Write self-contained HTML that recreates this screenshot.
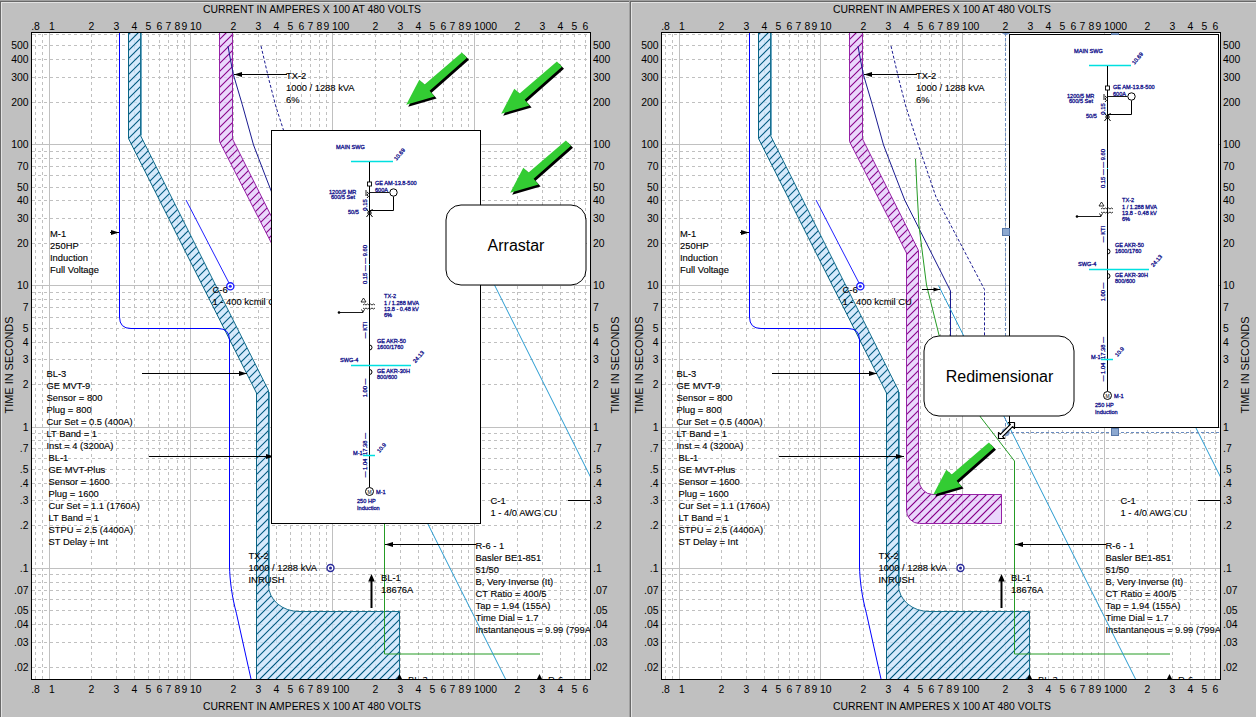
<!DOCTYPE html><html><head><meta charset="utf-8"><style>html,body{margin:0;padding:0;background:#c0c0c0;overflow:hidden}svg{display:block}</style></head><body><svg width="1256" height="717" viewBox="0 0 1256 717" font-family="'Liberation Sans', sans-serif">
<defs>
<clipPath id="plotclip"><rect x="32" y="33" width="558" height="646"/></clipPath>
<clipPath id="tealclip"><path d="M128.5 20V138.5L256.5 393V690H399.5V611.5H299A30.5 26.5 0 0 1 268.5 585V390.5L140.5 135.5V20Z"/></clipPath><clipPath id="magclip"><path d="M219.5 20V141.5L276.5 253V510A13 13 0 0 0 289.5 523.5H371.5V494.5H303A14.5 16 0 0 1 288.5 478.5V250.5L232.5 139V20Z"/></clipPath>
</defs>
<rect width="1256" height="717" fill="#a0a0a0"/>
<g transform="translate(0 0)">
<rect x="0" y="1" width="629" height="716" fill="#c0c0c0"/>
<rect x="0" y="1" width="629" height="1" fill="#696969"/><rect x="0" y="1" width="1" height="716" fill="#696969"/>
<rect x="1" y="2" width="628" height="1" fill="#e3e3e3"/><rect x="1" y="2" width="1" height="715" fill="#e3e3e3"/>
<text x="312" y="13" font-size="10.4" text-anchor="middle">CURRENT IN AMPERES X 100 AT 480 VOLTS</text>
<text x="312" y="710" font-size="10.4" text-anchor="middle">CURRENT IN AMPERES X 100 AT 480 VOLTS</text>
<text x="35.5" y="30" font-size="10.4" text-anchor="middle">.8</text>
<text x="35.5" y="693" font-size="10.4" text-anchor="middle">.8</text>
<text x="49.0" y="30" font-size="10.4" text-anchor="start">1</text>
<text x="49.0" y="693" font-size="10.4" text-anchor="start">1</text>
<text x="91.5" y="30" font-size="10.4" text-anchor="middle">2</text>
<text x="91.5" y="693" font-size="10.4" text-anchor="middle">2</text>
<text x="116.5" y="30" font-size="10.4" text-anchor="middle">3</text>
<text x="116.5" y="693" font-size="10.4" text-anchor="middle">3</text>
<text x="134.5" y="30" font-size="10.4" text-anchor="middle">4</text>
<text x="134.5" y="693" font-size="10.4" text-anchor="middle">4</text>
<text x="148.5" y="30" font-size="10.4" text-anchor="middle">5</text>
<text x="148.5" y="693" font-size="10.4" text-anchor="middle">5</text>
<text x="159.5" y="30" font-size="10.4" text-anchor="middle">6</text>
<text x="159.5" y="693" font-size="10.4" text-anchor="middle">6</text>
<text x="168.5" y="30" font-size="10.4" text-anchor="middle">7</text>
<text x="168.5" y="693" font-size="10.4" text-anchor="middle">7</text>
<text x="177.5" y="30" font-size="10.4" text-anchor="middle">8</text>
<text x="177.5" y="693" font-size="10.4" text-anchor="middle">8</text>
<text x="184.5" y="30" font-size="10.4" text-anchor="middle">9</text>
<text x="184.5" y="693" font-size="10.4" text-anchor="middle">9</text>
<text x="190.0" y="30" font-size="10.4" text-anchor="start">10</text>
<text x="190.0" y="693" font-size="10.4" text-anchor="start">10</text>
<text x="233.5" y="30" font-size="10.4" text-anchor="middle">2</text>
<text x="233.5" y="693" font-size="10.4" text-anchor="middle">2</text>
<text x="258.5" y="30" font-size="10.4" text-anchor="middle">3</text>
<text x="258.5" y="693" font-size="10.4" text-anchor="middle">3</text>
<text x="276.5" y="30" font-size="10.4" text-anchor="middle">4</text>
<text x="276.5" y="693" font-size="10.4" text-anchor="middle">4</text>
<text x="290.5" y="30" font-size="10.4" text-anchor="middle">5</text>
<text x="290.5" y="693" font-size="10.4" text-anchor="middle">5</text>
<text x="301.5" y="30" font-size="10.4" text-anchor="middle">6</text>
<text x="301.5" y="693" font-size="10.4" text-anchor="middle">6</text>
<text x="310.5" y="30" font-size="10.4" text-anchor="middle">7</text>
<text x="310.5" y="693" font-size="10.4" text-anchor="middle">7</text>
<text x="319.5" y="30" font-size="10.4" text-anchor="middle">8</text>
<text x="319.5" y="693" font-size="10.4" text-anchor="middle">8</text>
<text x="326.5" y="30" font-size="10.4" text-anchor="middle">9</text>
<text x="326.5" y="693" font-size="10.4" text-anchor="middle">9</text>
<text x="332.0" y="30" font-size="10.4" text-anchor="start">100</text>
<text x="332.0" y="693" font-size="10.4" text-anchor="start">100</text>
<text x="375.5" y="30" font-size="10.4" text-anchor="middle">2</text>
<text x="375.5" y="693" font-size="10.4" text-anchor="middle">2</text>
<text x="400.5" y="30" font-size="10.4" text-anchor="middle">3</text>
<text x="400.5" y="693" font-size="10.4" text-anchor="middle">3</text>
<text x="418.5" y="30" font-size="10.4" text-anchor="middle">4</text>
<text x="418.5" y="693" font-size="10.4" text-anchor="middle">4</text>
<text x="432.5" y="30" font-size="10.4" text-anchor="middle">5</text>
<text x="432.5" y="693" font-size="10.4" text-anchor="middle">5</text>
<text x="443.5" y="30" font-size="10.4" text-anchor="middle">6</text>
<text x="443.5" y="693" font-size="10.4" text-anchor="middle">6</text>
<text x="452.5" y="30" font-size="10.4" text-anchor="middle">7</text>
<text x="452.5" y="693" font-size="10.4" text-anchor="middle">7</text>
<text x="461.5" y="30" font-size="10.4" text-anchor="middle">8</text>
<text x="461.5" y="693" font-size="10.4" text-anchor="middle">8</text>
<text x="468.5" y="30" font-size="10.4" text-anchor="middle">9</text>
<text x="468.5" y="693" font-size="10.4" text-anchor="middle">9</text>
<text x="474.0" y="30" font-size="10.4" text-anchor="start">1000</text>
<text x="474.0" y="693" font-size="10.4" text-anchor="start">1000</text>
<text x="517.5" y="30" font-size="10.4" text-anchor="middle">2</text>
<text x="517.5" y="693" font-size="10.4" text-anchor="middle">2</text>
<text x="542.5" y="30" font-size="10.4" text-anchor="middle">3</text>
<text x="542.5" y="693" font-size="10.4" text-anchor="middle">3</text>
<text x="560.5" y="30" font-size="10.4" text-anchor="middle">4</text>
<text x="560.5" y="693" font-size="10.4" text-anchor="middle">4</text>
<text x="574.5" y="30" font-size="10.4" text-anchor="middle">5</text>
<text x="574.5" y="693" font-size="10.4" text-anchor="middle">5</text>
<text x="585.5" y="30" font-size="10.4" text-anchor="middle">6</text>
<text x="585.5" y="693" font-size="10.4" text-anchor="middle">6</text>
<text x="28.5" y="49.2" font-size="10.4" text-anchor="end">500</text>
<text x="593" y="49.2" font-size="10.4">500</text>
<text x="28.5" y="63.2" font-size="10.4" text-anchor="end">400</text>
<text x="593" y="63.2" font-size="10.4">400</text>
<text x="28.5" y="81.2" font-size="10.4" text-anchor="end">300</text>
<text x="593" y="81.2" font-size="10.4">300</text>
<text x="28.5" y="106.2" font-size="10.4" text-anchor="end">200</text>
<text x="593" y="106.2" font-size="10.4">200</text>
<text x="28.5" y="148.2" font-size="10.4" text-anchor="end">100</text>
<text x="593" y="148.2" font-size="10.4">100</text>
<text x="28.5" y="170.2" font-size="10.4" text-anchor="end">70</text>
<text x="593" y="170.2" font-size="10.4">70</text>
<text x="28.5" y="191.2" font-size="10.4" text-anchor="end">50</text>
<text x="593" y="191.2" font-size="10.4">50</text>
<text x="28.5" y="204.2" font-size="10.4" text-anchor="end">40</text>
<text x="593" y="204.2" font-size="10.4">40</text>
<text x="28.5" y="222.2" font-size="10.4" text-anchor="end">30</text>
<text x="593" y="222.2" font-size="10.4">30</text>
<text x="28.5" y="247.2" font-size="10.4" text-anchor="end">20</text>
<text x="593" y="247.2" font-size="10.4">20</text>
<text x="28.5" y="289.2" font-size="10.4" text-anchor="end">10</text>
<text x="593" y="289.2" font-size="10.4">10</text>
<text x="28.5" y="311.2" font-size="10.4" text-anchor="end">7</text>
<text x="593" y="311.2" font-size="10.4">7</text>
<text x="28.5" y="332.2" font-size="10.4" text-anchor="end">5</text>
<text x="593" y="332.2" font-size="10.4">5</text>
<text x="28.5" y="346.2" font-size="10.4" text-anchor="end">4</text>
<text x="593" y="346.2" font-size="10.4">4</text>
<text x="28.5" y="363.2" font-size="10.4" text-anchor="end">3</text>
<text x="593" y="363.2" font-size="10.4">3</text>
<text x="28.5" y="388.2" font-size="10.4" text-anchor="end">2</text>
<text x="593" y="388.2" font-size="10.4">2</text>
<text x="28.5" y="431.2" font-size="10.4" text-anchor="end">1</text>
<text x="593" y="431.2" font-size="10.4">1</text>
<text x="28.5" y="452.2" font-size="10.4" text-anchor="end">.7</text>
<text x="593" y="452.2" font-size="10.4">.7</text>
<text x="28.5" y="473.2" font-size="10.4" text-anchor="end">.5</text>
<text x="593" y="473.2" font-size="10.4">.5</text>
<text x="28.5" y="487.2" font-size="10.4" text-anchor="end">.4</text>
<text x="593" y="487.2" font-size="10.4">.4</text>
<text x="28.5" y="504.2" font-size="10.4" text-anchor="end">.3</text>
<text x="593" y="504.2" font-size="10.4">.3</text>
<text x="28.5" y="529.2" font-size="10.4" text-anchor="end">.2</text>
<text x="593" y="529.2" font-size="10.4">.2</text>
<text x="28.5" y="572.2" font-size="10.4" text-anchor="end">.1</text>
<text x="593" y="572.2" font-size="10.4">.1</text>
<text x="28.5" y="594.2" font-size="10.4" text-anchor="end">.07</text>
<text x="593" y="594.2" font-size="10.4">.07</text>
<text x="28.5" y="614.2" font-size="10.4" text-anchor="end">.05</text>
<text x="593" y="614.2" font-size="10.4">.05</text>
<text x="28.5" y="628.2" font-size="10.4" text-anchor="end">.04</text>
<text x="593" y="628.2" font-size="10.4">.04</text>
<text x="28.5" y="646.2" font-size="10.4" text-anchor="end">.03</text>
<text x="593" y="646.2" font-size="10.4">.03</text>
<text x="28.5" y="671.2" font-size="10.4" text-anchor="end">.02</text>
<text x="593" y="671.2" font-size="10.4">.02</text>
<text transform="translate(12.6 365) rotate(-90)" font-size="10.9" text-anchor="middle">TIME IN SECONDS</text>
<text transform="translate(618.6 365) rotate(-90)" font-size="10.9" text-anchor="middle">TIME IN SECONDS</text>
<rect x="31.5" y="32.5" width="559" height="647" fill="#fff" stroke="#000"/>
<g clip-path="url(#plotclip)">
<path d="M35.5 34V679M42.5 34V679M91.5 34V679M116.5 34V679M134.5 34V679M148.5 34V679M159.5 34V679M168.5 34V679M177.5 34V679M184.5 34V679M233.5 34V679M258.5 34V679M276.5 34V679M290.5 34V679M301.5 34V679M310.5 34V679M319.5 34V679M326.5 34V679M375.5 34V679M400.5 34V679M418.5 34V679M432.5 34V679M443.5 34V679M452.5 34V679M461.5 34V679M468.5 34V679M517.5 34V679M542.5 34V679M560.5 34V679M574.5 34V679M585.5 34V679" stroke="#c0c0c0" stroke-dasharray="3 3" fill="none"/>
<path d="M32 667.5H590M32 642.5H590M32 624.5H590M32 610.5H590M32 599.5H590M32 590.5H590M32 582.5H590M32 574.5H590M32 525.5H590M32 500.5H590M32 483.5H590M32 469.5H590M32 458.5H590M32 448.5H590M32 440.5H590M32 433.5H590M32 384.5H590M32 359.5H590M32 342.5H590M32 328.5H590M32 317.5H590M32 307.5H590M32 299.5H590M32 292.5H590M32 243.5H590M32 218.5H590M32 200.5H590M32 187.5H590M32 175.5H590M32 166.5H590M32 158.5H590M32 151.5H590M32 102.5H590M32 77.5H590M32 59.5H590M32 45.5H590M32 34.5H590" stroke="#c0c0c0" stroke-dasharray="3 3" fill="none"/>
<path d="M49.5 33V679M190.5 33V679M332.5 33V679M474.5 33V679M32 568.5H590M32 427.5H590M32 285.5H590M32 144.5H590" stroke="#c0c0c0" fill="none"/>
<path d="M128.5 20V138.5L256.5 393V690H399.5V611.5H299A30.5 26.5 0 0 1 268.5 585V390.5L140.5 135.5V20Z" fill="#c8e3fb" fill-opacity="0.75"/>
<path d="M-557 720L163 0M-549 720L171 0M-541 720L179 0M-533 720L187 0M-525 720L195 0M-517 720L203 0M-509 720L211 0M-501 720L219 0M-493 720L227 0M-485 720L235 0M-477 720L243 0M-469 720L251 0M-461 720L259 0M-453 720L267 0M-445 720L275 0M-437 720L283 0M-429 720L291 0M-421 720L299 0M-413 720L307 0M-405 720L315 0M-397 720L323 0M-389 720L331 0M-381 720L339 0M-373 720L347 0M-365 720L355 0M-357 720L363 0M-349 720L371 0M-341 720L379 0M-333 720L387 0M-325 720L395 0M-317 720L403 0M-309 720L411 0M-301 720L419 0M-293 720L427 0M-285 720L435 0M-277 720L443 0M-269 720L451 0M-261 720L459 0M-253 720L467 0M-245 720L475 0M-237 720L483 0M-229 720L491 0M-221 720L499 0M-213 720L507 0M-205 720L515 0M-197 720L523 0M-189 720L531 0M-181 720L539 0M-173 720L547 0M-165 720L555 0M-157 720L563 0M-149 720L571 0M-141 720L579 0M-133 720L587 0M-125 720L595 0M-117 720L603 0M-109 720L611 0M-101 720L619 0M-93 720L627 0M-85 720L635 0M-77 720L643 0M-69 720L651 0M-61 720L659 0M-53 720L667 0M-45 720L675 0M-37 720L683 0M-29 720L691 0M-21 720L699 0M-13 720L707 0M-5 720L715 0M3 720L723 0M11 720L731 0M19 720L739 0M27 720L747 0M35 720L755 0M43 720L763 0M51 720L771 0M59 720L779 0M67 720L787 0M75 720L795 0M83 720L803 0M91 720L811 0M99 720L819 0M107 720L827 0M115 720L835 0M123 720L843 0M131 720L851 0M139 720L859 0M147 720L867 0M155 720L875 0M163 720L883 0M171 720L891 0M179 720L899 0M187 720L907 0M195 720L915 0M203 720L923 0M211 720L931 0M219 720L939 0M227 720L947 0M235 720L955 0M243 720L963 0M251 720L971 0M259 720L979 0M267 720L987 0M275 720L995 0M283 720L1003 0M291 720L1011 0M299 720L1019 0M307 720L1027 0M315 720L1035 0M323 720L1043 0M331 720L1051 0M339 720L1059 0M347 720L1067 0M355 720L1075 0M363 720L1083 0M371 720L1091 0M379 720L1099 0M387 720L1107 0M395 720L1115 0" stroke="#005a80" stroke-width="1.15" fill="none" clip-path="url(#tealclip)"/>
<path d="M128.5 20V138.5L256.5 393V690" fill="none" stroke="#0b6484"/>
<path d="M141.5 20V135.5M269.5 392V586" fill="none" stroke="#64a4c0"/>
<path d="M140.5 20V135.5L268.5 390.5V585A30.5 26.5 0 0 0 299 611.5H399.5V690" fill="none" stroke="#17708f"/>
<path d="M219.5 20V141.5L276.5 253V510A13 13 0 0 0 289.5 523.5H371.5V494.5H303A14.5 16 0 0 1 288.5 478.5V250.5L232.5 139V20Z" fill="#e3cbfb" fill-opacity="0.75"/>
<path d="M-477 720L243 0M-469 720L251 0M-461 720L259 0M-453 720L267 0M-445 720L275 0M-437 720L283 0M-429 720L291 0M-421 720L299 0M-413 720L307 0M-405 720L315 0M-397 720L323 0M-389 720L331 0M-381 720L339 0M-373 720L347 0M-365 720L355 0M-357 720L363 0M-349 720L371 0M-341 720L379 0M-333 720L387 0M-325 720L395 0M-317 720L403 0M-309 720L411 0M-301 720L419 0M-293 720L427 0M-285 720L435 0M-277 720L443 0M-269 720L451 0M-261 720L459 0M-253 720L467 0M-245 720L475 0M-237 720L483 0M-229 720L491 0M-221 720L499 0M-213 720L507 0M-205 720L515 0M-197 720L523 0M-189 720L531 0M-181 720L539 0M-173 720L547 0M-165 720L555 0M-157 720L563 0M-149 720L571 0M-141 720L579 0M-133 720L587 0M-125 720L595 0M-117 720L603 0M-109 720L611 0M-101 720L619 0M-93 720L627 0M-85 720L635 0M-77 720L643 0M-69 720L651 0M-61 720L659 0M-53 720L667 0M-45 720L675 0M-37 720L683 0M-29 720L691 0M-21 720L699 0M-13 720L707 0M-5 720L715 0M3 720L723 0M11 720L731 0M19 720L739 0M27 720L747 0M35 720L755 0M43 720L763 0M51 720L771 0M59 720L779 0M67 720L787 0M75 720L795 0M83 720L803 0M91 720L811 0M99 720L819 0M107 720L827 0M115 720L835 0M123 720L843 0M131 720L851 0M139 720L859 0M147 720L867 0M155 720L875 0" stroke="#880088" stroke-width="1.15" fill="none" clip-path="url(#magclip)"/>
<path d="M219.5 20V141.5L276.5 253V510A13 13 0 0 0 289.5 523.5H371.5V494.5H303A14.5 16 0 0 1 288.5 478.5V250.5L232.5 139V20Z" fill="none" stroke="#9622a6"/>
<path d="M119.5 20V317Q119.5 328.5 131 328.5H218Q229.5 328.5 229.5 340V566C229.7 580 232 597 236.4 613.2L251 679" fill="none" stroke="#0000ff"/>
<path d="M186 200L229 283" fill="none" stroke="#2020ff"/>
<circle cx="230.3" cy="286.3" r="3.6" fill="#fff" stroke="#2020ff" stroke-width="1.4"/><circle cx="230.3" cy="286.3" r="1.5" fill="#2020ff"/>
<path d="M228 46L230.5 60L233.4 74.6L242.3 104.7L253.5 144.9L264.6 174L274.7 200L320.5 291V384" fill="none" stroke="#1a1a90"/>
<path d="M261 46L269 80L276 107L288 144L306 197L354.5 289.5V384" fill="none" stroke="#1a1a90" stroke-dasharray="3 2"/>
<path d="M285.5 159L287 190L289 226L296.5 285L309 335L350.5 417L384.5 461V654H540" fill="none" stroke="#259b25"/>
<path d="M308.5 285.5L505.5 679" fill="none" stroke="#2a9bd0"/>
<path d="M480 256L600 496" fill="none" stroke="#2a9bd0"/>
<circle cx="330.5" cy="568" r="3.5" fill="#fff" stroke="#2a2a9a" stroke-width="1.4"/><circle cx="330.5" cy="568" r="1.5" fill="#2a2a9a"/>
<g font-size="9.4" fill="#000" stroke="#000" stroke-width="0.12"><text x="286" y="78.5">TX-2</text><text x="286" y="90.5">1000 / 1288 kVA</text><text x="286" y="102.5">6%</text></g>
<path d="M234 74.5H287" stroke="#000" fill="none"/><path d="M234 74.5l8 -2.5v5z" fill="#000"/>
<g font-size="9.4" fill="#000" stroke="#000" stroke-width="0.12"><text x="50" y="236.5">M-1</text><text x="50" y="248.5">250HP</text><text x="50" y="260.5">Induction</text><text x="50" y="272.5">Full Voltage</text></g>
<path d="M110 232.5H119" stroke="#000" fill="none"/><path d="M119 232.5l-8 -2.5v5.0z" fill="#000"/>
<g font-size="9.4" fill="#000" stroke="#000" stroke-width="0.12"><text x="212.5" y="293">C-6</text><text x="212.5" y="305">1 - 400 kcmil CU</text></g>
<path d="M292 289.5H310" stroke="#000" fill="none"/><path d="M310 289.5l-6.5 -2v4z" fill="#000"/>
<g font-size="9.4" fill="#000" stroke="#000" stroke-width="0.12"><text x="46.5" y="376.5">BL-3</text><text x="46.5" y="388.5">GE MVT-9</text><text x="46.5" y="400.5">Sensor = 800</text><text x="46.5" y="412.5">Plug = 800</text><text x="46.5" y="424.5">Cur Set = 0.5 (400A)</text><text x="46.5" y="436.5">LT Band = 1</text><text x="46.5" y="448.5">Inst = 4 (3200A)</text></g>
<path d="M142 373.5H247" stroke="#000" fill="none"/><path d="M247 373.5l-8 -2.5v5.0z" fill="#000"/>
<g font-size="9.4" fill="#000" stroke="#000" stroke-width="0.12"><text x="48.5" y="460.5">BL-1</text><text x="48.5" y="472.5">GE MVT-Plus</text><text x="48.5" y="484.5">Sensor = 1600</text><text x="48.5" y="496.5">Plug = 1600</text><text x="48.5" y="508.5">Cur Set = 1.1 (1760A)</text><text x="48.5" y="520.5">LT Band = 1</text><text x="48.5" y="532.5">STPU = 2.5 (4400A)</text><text x="48.5" y="544.5">ST Delay = Int</text></g>
<path d="M149 456.5H274" stroke="#000" fill="none"/><path d="M274 456.5l-8 -2.5v5.0z" fill="#000"/>
<g font-size="9.4" fill="#000" stroke="#000" stroke-width="0.12"><text x="248.5" y="559">TX-2</text><text x="248.5" y="571">1000 / 1288 kVA</text><text x="248.5" y="583">INRUSH</text></g>
<g font-size="9.4" fill="#000" stroke="#000" stroke-width="0.12"><text x="381" y="581.2">BL-1</text><text x="381" y="593.2">18676A</text></g>
<path d="M371.5 608V580" stroke="#000" stroke-width="2" fill="none"/><path d="M371.5 574l-3.3 7.5h6.6z" fill="#000"/>
<g font-size="9.4" fill="#000" stroke="#000" stroke-width="0.12"><text x="475.5" y="549">R-6 - 1</text><text x="475.5" y="561">Basler BE1-851</text><text x="475.5" y="573">51/50</text><text x="475.5" y="585">B, Very Inverse (It)</text><text x="475.5" y="597">CT Ratio = 400/5</text><text x="475.5" y="609">Tap = 1.94 (155A)</text><text x="475.5" y="621">Time Dial = 1.7</text><text x="475.5" y="633">Instantaneous = 9.99 (799A)</text></g>
<path d="M385 544.5H476" stroke="#000" fill="none"/><path d="M385 544.5l8 -2.5v5z" fill="#000"/>
<g font-size="9.4" fill="#000" stroke="#000" stroke-width="0.12"><text x="490.5" y="504">C-1</text><text x="490.5" y="516">1 - 4/0 AWG CU</text></g>
<path d="M568 500.5H590" stroke="#000" fill="none"/>
<path d="M399.5 674l-3 6h6z" fill="#000"/>
<text x="408" y="683" font-size="9.4">BL-3</text>
<path d="M539.5 674l-3 6h6z" fill="#000"/>
<text x="548" y="683" font-size="9.4">R-6</text>
<g transform="translate(271 130)"><rect x="0.5" y="0.5" width="209" height="393" fill="#fff" stroke="#000"/><text x="65" y="18.5" font-size="5.6" fill="#10108a" stroke="#10108a" stroke-width="0.3">MAIN SWG</text>
<path d="M80 31.5H122" stroke="#00e0e0" stroke-width="1.5"/>
<text transform="translate(130 25.5) rotate(-50)" font-size="5.5" fill="#10108a" stroke="#10108a" stroke-width="0.3" text-anchor="middle">10.69</text>
<path d="M98.5 32V357" stroke="#000" fill="none"/>
<rect x="96.5" y="52" width="4" height="4" fill="#fff" stroke="#000" stroke-width="0.9"/>
<text x="104" y="55" font-size="5.6" fill="#10108a" stroke="#10108a" stroke-width="0.3">GE AM-13.8-500</text>
<text x="104" y="61.5" font-size="5.6" fill="#10108a" stroke="#10108a" stroke-width="0.3">600A</text>
<text x="58" y="63.5" font-size="5.6" fill="#10108a" stroke="#10108a" stroke-width="0.3">1200/5 MR</text>
<text x="60" y="69" font-size="5.6" fill="#10108a" stroke="#10108a" stroke-width="0.3">600/5 Set</text>
<path d="M95 60V66M98.5 62.5H118.5M96 62q3 1 0 3M96 65q3 1 0 3" stroke="#000" fill="none" stroke-width="0.9"/>
<circle cx="122.5" cy="62.5" r="3.7" fill="#fff" stroke="#000"/>
<path d="M122.5 66.5V80.5H98.5" stroke="#000" fill="none"/>
<path d="M95.5 79L101.5 87M101.5 79L95.5 87M96 83H101" stroke="#000" fill="none"/>
<text x="77" y="84" font-size="5.6" fill="#10108a" stroke="#10108a" stroke-width="0.3">50/5</text>
<text transform="translate(96 75) rotate(-90)" font-size="5.8" fill="#10108a" stroke="#10108a" stroke-width="0.3" text-anchor="middle">0.15</text>
<text transform="translate(96 134.5) rotate(-90)" font-size="5.8" fill="#10108a" stroke="#10108a" stroke-width="0.3" text-anchor="middle">0.15 — — 9.60</text>
<rect x="98" y="134" width="1" height="1" fill="#00e0e0"/>
<path d="M90 172l2.5 -4l2.5 4z" fill="none" stroke="#000" stroke-width="0.8"/>
<path d="M92 175q1.5 -2 3 0q1.5 -2 3 0q1.5 -2 3 0q1.5 -2 3 0M92 178q1.5 2 3 0q1.5 2 3 0q1.5 2 3 0q1.5 2 3 0" stroke="#000" fill="none" stroke-width="0.8"/>
<path d="M90.5 179.5l1.5 2.5l1.5 -2.5M92 182V182.5H68" stroke="#000" fill="none" stroke-width="0.9"/>
<circle cx="68" cy="182.5" r="1.3" fill="#000"/>
<text x="113" y="168" font-size="5.6" fill="#10108a" stroke="#10108a" stroke-width="0.3">TX-2</text>
<text x="113" y="174.5" font-size="5.6" fill="#10108a" stroke="#10108a" stroke-width="0.3">1 / 1.288 MVA</text>
<text x="113" y="180.5" font-size="5.6" fill="#10108a" stroke="#10108a" stroke-width="0.3">13.8 - 0.48 kV</text>
<text x="113" y="187" font-size="5.6" fill="#10108a" stroke="#10108a" stroke-width="0.3">6%</text>
<text transform="translate(96 200) rotate(-90)" font-size="5.8" fill="#10108a" stroke="#10108a" stroke-width="0.3" text-anchor="middle">— KTI</text>
<path d="M98.5 215a2 2 0 0 1 0 5M98.5 239.5a2 2 0 0 1 0 5" stroke="#000" fill="none"/>
<text x="106" y="213" font-size="5.6" fill="#10108a" stroke="#10108a" stroke-width="0.3">GE AKR-50</text>
<text x="106" y="219" font-size="5.6" fill="#10108a" stroke="#10108a" stroke-width="0.3">1600/1760</text>
<text x="69" y="231.5" font-size="5.6" fill="#10108a" stroke="#10108a" stroke-width="0.3">SWG-4</text>
<path d="M80 235.5H140" stroke="#00e0e0" stroke-width="1.5"/>
<text transform="translate(149 228) rotate(-50)" font-size="5.5" fill="#10108a" stroke="#10108a" stroke-width="0.3" text-anchor="middle">24.13</text>
<text x="106" y="243" font-size="5.6" fill="#10108a" stroke="#10108a" stroke-width="0.3">GE AKR-30H</text>
<text x="106" y="249" font-size="5.6" fill="#10108a" stroke="#10108a" stroke-width="0.3">800/600</text>
<text transform="translate(96 258) rotate(-90)" font-size="5.8" fill="#10108a" stroke="#10108a" stroke-width="0.3" text-anchor="middle">1.00 —</text>
<text transform="translate(96 314) rotate(-90)" font-size="5.8" fill="#10108a" stroke="#10108a" stroke-width="0.3" text-anchor="middle">17.38 —</text>
<text x="82" y="324.5" font-size="5.6" fill="#10108a" stroke="#10108a" stroke-width="0.3">M-1</text>
<path d="M92 325.5H104" stroke="#00e0e0" stroke-width="1.5"/>
<text transform="translate(112 319) rotate(-50)" font-size="5.5" fill="#10108a" stroke="#10108a" stroke-width="0.3" text-anchor="middle">10.9</text>
<text transform="translate(96 338) rotate(-90)" font-size="5.8" fill="#10108a" stroke="#10108a" stroke-width="0.3" text-anchor="middle">— 1.04</text>
<circle cx="98.5" cy="361.5" r="4" fill="#fff" stroke="#000"/>
<text x="98.5" y="363.5" font-size="5" text-anchor="middle">M</text>
<text x="105" y="364" font-size="5.6" fill="#10108a" stroke="#10108a" stroke-width="0.3">M-1</text>
<text x="86" y="373" font-size="5.6" fill="#10108a" stroke="#10108a" stroke-width="0.3">250 HP</text>
<text x="86" y="379.5" font-size="5.6" fill="#10108a" stroke="#10108a" stroke-width="0.3">Induction</text></g>
<rect x="446" y="205" width="140" height="80" rx="15" ry="15" fill="#fff" stroke="#000"/><text x="516" y="251" font-size="16" text-anchor="middle">Arrastar</text>
<polygon points="463.9,54.6 469.0,59.8 431.6,92.7 436.6,98.5 408.2,106.7 421.3,81.8 426.6,86.6" fill="#000"/><polygon points="461.9,52.6 467.0,57.8 429.6,90.7 434.6,96.5 406.2,104.7 419.3,79.8 424.6,84.6" fill="#33cc33"/>
<polygon points="558.9,63.6 564.0,68.8 526.6,101.7 531.6,107.5 503.2,115.7 516.3,90.8 521.6,95.6" fill="#000"/><polygon points="556.9,61.6 562.0,66.8 524.6,99.7 529.6,105.5 501.2,113.7 514.3,88.8 519.6,93.6" fill="#33cc33"/>
<polygon points="567.9,142.6 573.0,147.8 535.6,180.7 540.6,186.5 512.2,194.7 525.3,169.8 530.6,174.6" fill="#000"/><polygon points="565.9,140.6 571.0,145.8 533.6,178.7 538.6,184.5 510.2,192.7 523.3,167.8 528.6,172.6" fill="#33cc33"/>
</g>
</g>
<g transform="translate(630 0)">
<rect x="0" y="1" width="629" height="716" fill="#c0c0c0"/>
<rect x="0" y="1" width="629" height="1" fill="#696969"/><rect x="0" y="1" width="1" height="716" fill="#696969"/>
<rect x="1" y="2" width="628" height="1" fill="#e3e3e3"/><rect x="1" y="2" width="1" height="715" fill="#e3e3e3"/>
<text x="312" y="13" font-size="10.4" text-anchor="middle">CURRENT IN AMPERES X 100 AT 480 VOLTS</text>
<text x="312" y="710" font-size="10.4" text-anchor="middle">CURRENT IN AMPERES X 100 AT 480 VOLTS</text>
<text x="35.5" y="30" font-size="10.4" text-anchor="middle">.8</text>
<text x="35.5" y="693" font-size="10.4" text-anchor="middle">.8</text>
<text x="49.0" y="30" font-size="10.4" text-anchor="start">1</text>
<text x="49.0" y="693" font-size="10.4" text-anchor="start">1</text>
<text x="91.5" y="30" font-size="10.4" text-anchor="middle">2</text>
<text x="91.5" y="693" font-size="10.4" text-anchor="middle">2</text>
<text x="116.5" y="30" font-size="10.4" text-anchor="middle">3</text>
<text x="116.5" y="693" font-size="10.4" text-anchor="middle">3</text>
<text x="134.5" y="30" font-size="10.4" text-anchor="middle">4</text>
<text x="134.5" y="693" font-size="10.4" text-anchor="middle">4</text>
<text x="148.5" y="30" font-size="10.4" text-anchor="middle">5</text>
<text x="148.5" y="693" font-size="10.4" text-anchor="middle">5</text>
<text x="159.5" y="30" font-size="10.4" text-anchor="middle">6</text>
<text x="159.5" y="693" font-size="10.4" text-anchor="middle">6</text>
<text x="168.5" y="30" font-size="10.4" text-anchor="middle">7</text>
<text x="168.5" y="693" font-size="10.4" text-anchor="middle">7</text>
<text x="177.5" y="30" font-size="10.4" text-anchor="middle">8</text>
<text x="177.5" y="693" font-size="10.4" text-anchor="middle">8</text>
<text x="184.5" y="30" font-size="10.4" text-anchor="middle">9</text>
<text x="184.5" y="693" font-size="10.4" text-anchor="middle">9</text>
<text x="190.0" y="30" font-size="10.4" text-anchor="start">10</text>
<text x="190.0" y="693" font-size="10.4" text-anchor="start">10</text>
<text x="233.5" y="30" font-size="10.4" text-anchor="middle">2</text>
<text x="233.5" y="693" font-size="10.4" text-anchor="middle">2</text>
<text x="258.5" y="30" font-size="10.4" text-anchor="middle">3</text>
<text x="258.5" y="693" font-size="10.4" text-anchor="middle">3</text>
<text x="276.5" y="30" font-size="10.4" text-anchor="middle">4</text>
<text x="276.5" y="693" font-size="10.4" text-anchor="middle">4</text>
<text x="290.5" y="30" font-size="10.4" text-anchor="middle">5</text>
<text x="290.5" y="693" font-size="10.4" text-anchor="middle">5</text>
<text x="301.5" y="30" font-size="10.4" text-anchor="middle">6</text>
<text x="301.5" y="693" font-size="10.4" text-anchor="middle">6</text>
<text x="310.5" y="30" font-size="10.4" text-anchor="middle">7</text>
<text x="310.5" y="693" font-size="10.4" text-anchor="middle">7</text>
<text x="319.5" y="30" font-size="10.4" text-anchor="middle">8</text>
<text x="319.5" y="693" font-size="10.4" text-anchor="middle">8</text>
<text x="326.5" y="30" font-size="10.4" text-anchor="middle">9</text>
<text x="326.5" y="693" font-size="10.4" text-anchor="middle">9</text>
<text x="332.0" y="30" font-size="10.4" text-anchor="start">100</text>
<text x="332.0" y="693" font-size="10.4" text-anchor="start">100</text>
<text x="375.5" y="30" font-size="10.4" text-anchor="middle">2</text>
<text x="375.5" y="693" font-size="10.4" text-anchor="middle">2</text>
<text x="400.5" y="30" font-size="10.4" text-anchor="middle">3</text>
<text x="400.5" y="693" font-size="10.4" text-anchor="middle">3</text>
<text x="418.5" y="30" font-size="10.4" text-anchor="middle">4</text>
<text x="418.5" y="693" font-size="10.4" text-anchor="middle">4</text>
<text x="432.5" y="30" font-size="10.4" text-anchor="middle">5</text>
<text x="432.5" y="693" font-size="10.4" text-anchor="middle">5</text>
<text x="443.5" y="30" font-size="10.4" text-anchor="middle">6</text>
<text x="443.5" y="693" font-size="10.4" text-anchor="middle">6</text>
<text x="452.5" y="30" font-size="10.4" text-anchor="middle">7</text>
<text x="452.5" y="693" font-size="10.4" text-anchor="middle">7</text>
<text x="461.5" y="30" font-size="10.4" text-anchor="middle">8</text>
<text x="461.5" y="693" font-size="10.4" text-anchor="middle">8</text>
<text x="468.5" y="30" font-size="10.4" text-anchor="middle">9</text>
<text x="468.5" y="693" font-size="10.4" text-anchor="middle">9</text>
<text x="474.0" y="30" font-size="10.4" text-anchor="start">1000</text>
<text x="474.0" y="693" font-size="10.4" text-anchor="start">1000</text>
<text x="517.5" y="30" font-size="10.4" text-anchor="middle">2</text>
<text x="517.5" y="693" font-size="10.4" text-anchor="middle">2</text>
<text x="542.5" y="30" font-size="10.4" text-anchor="middle">3</text>
<text x="542.5" y="693" font-size="10.4" text-anchor="middle">3</text>
<text x="560.5" y="30" font-size="10.4" text-anchor="middle">4</text>
<text x="560.5" y="693" font-size="10.4" text-anchor="middle">4</text>
<text x="574.5" y="30" font-size="10.4" text-anchor="middle">5</text>
<text x="574.5" y="693" font-size="10.4" text-anchor="middle">5</text>
<text x="585.5" y="30" font-size="10.4" text-anchor="middle">6</text>
<text x="585.5" y="693" font-size="10.4" text-anchor="middle">6</text>
<text x="28.5" y="49.2" font-size="10.4" text-anchor="end">500</text>
<text x="593" y="49.2" font-size="10.4">500</text>
<text x="28.5" y="63.2" font-size="10.4" text-anchor="end">400</text>
<text x="593" y="63.2" font-size="10.4">400</text>
<text x="28.5" y="81.2" font-size="10.4" text-anchor="end">300</text>
<text x="593" y="81.2" font-size="10.4">300</text>
<text x="28.5" y="106.2" font-size="10.4" text-anchor="end">200</text>
<text x="593" y="106.2" font-size="10.4">200</text>
<text x="28.5" y="148.2" font-size="10.4" text-anchor="end">100</text>
<text x="593" y="148.2" font-size="10.4">100</text>
<text x="28.5" y="170.2" font-size="10.4" text-anchor="end">70</text>
<text x="593" y="170.2" font-size="10.4">70</text>
<text x="28.5" y="191.2" font-size="10.4" text-anchor="end">50</text>
<text x="593" y="191.2" font-size="10.4">50</text>
<text x="28.5" y="204.2" font-size="10.4" text-anchor="end">40</text>
<text x="593" y="204.2" font-size="10.4">40</text>
<text x="28.5" y="222.2" font-size="10.4" text-anchor="end">30</text>
<text x="593" y="222.2" font-size="10.4">30</text>
<text x="28.5" y="247.2" font-size="10.4" text-anchor="end">20</text>
<text x="593" y="247.2" font-size="10.4">20</text>
<text x="28.5" y="289.2" font-size="10.4" text-anchor="end">10</text>
<text x="593" y="289.2" font-size="10.4">10</text>
<text x="28.5" y="311.2" font-size="10.4" text-anchor="end">7</text>
<text x="593" y="311.2" font-size="10.4">7</text>
<text x="28.5" y="332.2" font-size="10.4" text-anchor="end">5</text>
<text x="593" y="332.2" font-size="10.4">5</text>
<text x="28.5" y="346.2" font-size="10.4" text-anchor="end">4</text>
<text x="593" y="346.2" font-size="10.4">4</text>
<text x="28.5" y="363.2" font-size="10.4" text-anchor="end">3</text>
<text x="593" y="363.2" font-size="10.4">3</text>
<text x="28.5" y="388.2" font-size="10.4" text-anchor="end">2</text>
<text x="593" y="388.2" font-size="10.4">2</text>
<text x="28.5" y="431.2" font-size="10.4" text-anchor="end">1</text>
<text x="593" y="431.2" font-size="10.4">1</text>
<text x="28.5" y="452.2" font-size="10.4" text-anchor="end">.7</text>
<text x="593" y="452.2" font-size="10.4">.7</text>
<text x="28.5" y="473.2" font-size="10.4" text-anchor="end">.5</text>
<text x="593" y="473.2" font-size="10.4">.5</text>
<text x="28.5" y="487.2" font-size="10.4" text-anchor="end">.4</text>
<text x="593" y="487.2" font-size="10.4">.4</text>
<text x="28.5" y="504.2" font-size="10.4" text-anchor="end">.3</text>
<text x="593" y="504.2" font-size="10.4">.3</text>
<text x="28.5" y="529.2" font-size="10.4" text-anchor="end">.2</text>
<text x="593" y="529.2" font-size="10.4">.2</text>
<text x="28.5" y="572.2" font-size="10.4" text-anchor="end">.1</text>
<text x="593" y="572.2" font-size="10.4">.1</text>
<text x="28.5" y="594.2" font-size="10.4" text-anchor="end">.07</text>
<text x="593" y="594.2" font-size="10.4">.07</text>
<text x="28.5" y="614.2" font-size="10.4" text-anchor="end">.05</text>
<text x="593" y="614.2" font-size="10.4">.05</text>
<text x="28.5" y="628.2" font-size="10.4" text-anchor="end">.04</text>
<text x="593" y="628.2" font-size="10.4">.04</text>
<text x="28.5" y="646.2" font-size="10.4" text-anchor="end">.03</text>
<text x="593" y="646.2" font-size="10.4">.03</text>
<text x="28.5" y="671.2" font-size="10.4" text-anchor="end">.02</text>
<text x="593" y="671.2" font-size="10.4">.02</text>
<text transform="translate(12.6 365) rotate(-90)" font-size="10.9" text-anchor="middle">TIME IN SECONDS</text>
<text transform="translate(618.6 365) rotate(-90)" font-size="10.9" text-anchor="middle">TIME IN SECONDS</text>
<rect x="31.5" y="32.5" width="559" height="647" fill="#fff" stroke="#000"/>
<g clip-path="url(#plotclip)">
<path d="M35.5 34V679M42.5 34V679M91.5 34V679M116.5 34V679M134.5 34V679M148.5 34V679M159.5 34V679M168.5 34V679M177.5 34V679M184.5 34V679M233.5 34V679M258.5 34V679M276.5 34V679M290.5 34V679M301.5 34V679M310.5 34V679M319.5 34V679M326.5 34V679M375.5 34V679M400.5 34V679M418.5 34V679M432.5 34V679M443.5 34V679M452.5 34V679M461.5 34V679M468.5 34V679M517.5 34V679M542.5 34V679M560.5 34V679M574.5 34V679M585.5 34V679" stroke="#c0c0c0" stroke-dasharray="3 3" fill="none"/>
<path d="M32 667.5H590M32 642.5H590M32 624.5H590M32 610.5H590M32 599.5H590M32 590.5H590M32 582.5H590M32 574.5H590M32 525.5H590M32 500.5H590M32 483.5H590M32 469.5H590M32 458.5H590M32 448.5H590M32 440.5H590M32 433.5H590M32 384.5H590M32 359.5H590M32 342.5H590M32 328.5H590M32 317.5H590M32 307.5H590M32 299.5H590M32 292.5H590M32 243.5H590M32 218.5H590M32 200.5H590M32 187.5H590M32 175.5H590M32 166.5H590M32 158.5H590M32 151.5H590M32 102.5H590M32 77.5H590M32 59.5H590M32 45.5H590M32 34.5H590" stroke="#c0c0c0" stroke-dasharray="3 3" fill="none"/>
<path d="M49.5 33V679M190.5 33V679M332.5 33V679M474.5 33V679M32 568.5H590M32 427.5H590M32 285.5H590M32 144.5H590" stroke="#c0c0c0" fill="none"/>
<path d="M128.5 20V138.5L256.5 393V690H399.5V611.5H299A30.5 26.5 0 0 1 268.5 585V390.5L140.5 135.5V20Z" fill="#c8e3fb" fill-opacity="0.75"/>
<path d="M-557 720L163 0M-549 720L171 0M-541 720L179 0M-533 720L187 0M-525 720L195 0M-517 720L203 0M-509 720L211 0M-501 720L219 0M-493 720L227 0M-485 720L235 0M-477 720L243 0M-469 720L251 0M-461 720L259 0M-453 720L267 0M-445 720L275 0M-437 720L283 0M-429 720L291 0M-421 720L299 0M-413 720L307 0M-405 720L315 0M-397 720L323 0M-389 720L331 0M-381 720L339 0M-373 720L347 0M-365 720L355 0M-357 720L363 0M-349 720L371 0M-341 720L379 0M-333 720L387 0M-325 720L395 0M-317 720L403 0M-309 720L411 0M-301 720L419 0M-293 720L427 0M-285 720L435 0M-277 720L443 0M-269 720L451 0M-261 720L459 0M-253 720L467 0M-245 720L475 0M-237 720L483 0M-229 720L491 0M-221 720L499 0M-213 720L507 0M-205 720L515 0M-197 720L523 0M-189 720L531 0M-181 720L539 0M-173 720L547 0M-165 720L555 0M-157 720L563 0M-149 720L571 0M-141 720L579 0M-133 720L587 0M-125 720L595 0M-117 720L603 0M-109 720L611 0M-101 720L619 0M-93 720L627 0M-85 720L635 0M-77 720L643 0M-69 720L651 0M-61 720L659 0M-53 720L667 0M-45 720L675 0M-37 720L683 0M-29 720L691 0M-21 720L699 0M-13 720L707 0M-5 720L715 0M3 720L723 0M11 720L731 0M19 720L739 0M27 720L747 0M35 720L755 0M43 720L763 0M51 720L771 0M59 720L779 0M67 720L787 0M75 720L795 0M83 720L803 0M91 720L811 0M99 720L819 0M107 720L827 0M115 720L835 0M123 720L843 0M131 720L851 0M139 720L859 0M147 720L867 0M155 720L875 0M163 720L883 0M171 720L891 0M179 720L899 0M187 720L907 0M195 720L915 0M203 720L923 0M211 720L931 0M219 720L939 0M227 720L947 0M235 720L955 0M243 720L963 0M251 720L971 0M259 720L979 0M267 720L987 0M275 720L995 0M283 720L1003 0M291 720L1011 0M299 720L1019 0M307 720L1027 0M315 720L1035 0M323 720L1043 0M331 720L1051 0M339 720L1059 0M347 720L1067 0M355 720L1075 0M363 720L1083 0M371 720L1091 0M379 720L1099 0M387 720L1107 0M395 720L1115 0" stroke="#005a80" stroke-width="1.15" fill="none" clip-path="url(#tealclip)"/>
<path d="M128.5 20V138.5L256.5 393V690" fill="none" stroke="#0b6484"/>
<path d="M141.5 20V135.5M269.5 392V586" fill="none" stroke="#64a4c0"/>
<path d="M140.5 20V135.5L268.5 390.5V585A30.5 26.5 0 0 0 299 611.5H399.5V690" fill="none" stroke="#17708f"/>
<path d="M219.5 20V141.5L276.5 253V510A13 13 0 0 0 289.5 523.5H371.5V494.5H303A14.5 16 0 0 1 288.5 478.5V250.5L232.5 139V20Z" fill="#e3cbfb" fill-opacity="0.75"/>
<path d="M-477 720L243 0M-469 720L251 0M-461 720L259 0M-453 720L267 0M-445 720L275 0M-437 720L283 0M-429 720L291 0M-421 720L299 0M-413 720L307 0M-405 720L315 0M-397 720L323 0M-389 720L331 0M-381 720L339 0M-373 720L347 0M-365 720L355 0M-357 720L363 0M-349 720L371 0M-341 720L379 0M-333 720L387 0M-325 720L395 0M-317 720L403 0M-309 720L411 0M-301 720L419 0M-293 720L427 0M-285 720L435 0M-277 720L443 0M-269 720L451 0M-261 720L459 0M-253 720L467 0M-245 720L475 0M-237 720L483 0M-229 720L491 0M-221 720L499 0M-213 720L507 0M-205 720L515 0M-197 720L523 0M-189 720L531 0M-181 720L539 0M-173 720L547 0M-165 720L555 0M-157 720L563 0M-149 720L571 0M-141 720L579 0M-133 720L587 0M-125 720L595 0M-117 720L603 0M-109 720L611 0M-101 720L619 0M-93 720L627 0M-85 720L635 0M-77 720L643 0M-69 720L651 0M-61 720L659 0M-53 720L667 0M-45 720L675 0M-37 720L683 0M-29 720L691 0M-21 720L699 0M-13 720L707 0M-5 720L715 0M3 720L723 0M11 720L731 0M19 720L739 0M27 720L747 0M35 720L755 0M43 720L763 0M51 720L771 0M59 720L779 0M67 720L787 0M75 720L795 0M83 720L803 0M91 720L811 0M99 720L819 0M107 720L827 0M115 720L835 0M123 720L843 0M131 720L851 0M139 720L859 0M147 720L867 0M155 720L875 0" stroke="#880088" stroke-width="1.15" fill="none" clip-path="url(#magclip)"/>
<path d="M219.5 20V141.5L276.5 253V510A13 13 0 0 0 289.5 523.5H371.5V494.5H303A14.5 16 0 0 1 288.5 478.5V250.5L232.5 139V20Z" fill="none" stroke="#9622a6"/>
<path d="M119.5 20V317Q119.5 328.5 131 328.5H218Q229.5 328.5 229.5 340V566C229.7 580 232 597 236.4 613.2L251 679" fill="none" stroke="#0000ff"/>
<path d="M186 200L229 283" fill="none" stroke="#2020ff"/>
<circle cx="230.3" cy="286.3" r="3.6" fill="#fff" stroke="#2020ff" stroke-width="1.4"/><circle cx="230.3" cy="286.3" r="1.5" fill="#2020ff"/>
<path d="M228 46L230.5 60L233.4 74.6L242.3 104.7L253.5 144.9L264.6 174L274.7 200L320.5 291V384" fill="none" stroke="#1a1a90"/>
<path d="M261 46L269 80L276 107L288 144L306 197L354.5 289.5V384" fill="none" stroke="#1a1a90" stroke-dasharray="3 2"/>
<path d="M285.5 159L287 190L289 226L296.5 285L309 335L350.5 417L384.5 461V654H540" fill="none" stroke="#259b25"/>
<path d="M308.5 285.5L505.5 679" fill="none" stroke="#2a9bd0"/>
<path d="M480 256L600 496" fill="none" stroke="#2a9bd0"/>
<circle cx="330.5" cy="568" r="3.5" fill="#fff" stroke="#2a2a9a" stroke-width="1.4"/><circle cx="330.5" cy="568" r="1.5" fill="#2a2a9a"/>
<g font-size="9.4" fill="#000" stroke="#000" stroke-width="0.12"><text x="286" y="78.5">TX-2</text><text x="286" y="90.5">1000 / 1288 kVA</text><text x="286" y="102.5">6%</text></g>
<path d="M234 74.5H287" stroke="#000" fill="none"/><path d="M234 74.5l8 -2.5v5z" fill="#000"/>
<g font-size="9.4" fill="#000" stroke="#000" stroke-width="0.12"><text x="50" y="236.5">M-1</text><text x="50" y="248.5">250HP</text><text x="50" y="260.5">Induction</text><text x="50" y="272.5">Full Voltage</text></g>
<path d="M110 232.5H119" stroke="#000" fill="none"/><path d="M119 232.5l-8 -2.5v5.0z" fill="#000"/>
<g font-size="9.4" fill="#000" stroke="#000" stroke-width="0.12"><text x="212.5" y="293">C-6</text><text x="212.5" y="305">1 - 400 kcmil CU</text></g>
<path d="M292 289.5H310" stroke="#000" fill="none"/><path d="M310 289.5l-6.5 -2v4z" fill="#000"/>
<g font-size="9.4" fill="#000" stroke="#000" stroke-width="0.12"><text x="46.5" y="376.5">BL-3</text><text x="46.5" y="388.5">GE MVT-9</text><text x="46.5" y="400.5">Sensor = 800</text><text x="46.5" y="412.5">Plug = 800</text><text x="46.5" y="424.5">Cur Set = 0.5 (400A)</text><text x="46.5" y="436.5">LT Band = 1</text><text x="46.5" y="448.5">Inst = 4 (3200A)</text></g>
<path d="M142 373.5H247" stroke="#000" fill="none"/><path d="M247 373.5l-8 -2.5v5.0z" fill="#000"/>
<g font-size="9.4" fill="#000" stroke="#000" stroke-width="0.12"><text x="48.5" y="460.5">BL-1</text><text x="48.5" y="472.5">GE MVT-Plus</text><text x="48.5" y="484.5">Sensor = 1600</text><text x="48.5" y="496.5">Plug = 1600</text><text x="48.5" y="508.5">Cur Set = 1.1 (1760A)</text><text x="48.5" y="520.5">LT Band = 1</text><text x="48.5" y="532.5">STPU = 2.5 (4400A)</text><text x="48.5" y="544.5">ST Delay = Int</text></g>
<path d="M149 456.5H274" stroke="#000" fill="none"/><path d="M274 456.5l-8 -2.5v5.0z" fill="#000"/>
<g font-size="9.4" fill="#000" stroke="#000" stroke-width="0.12"><text x="248.5" y="559">TX-2</text><text x="248.5" y="571">1000 / 1288 kVA</text><text x="248.5" y="583">INRUSH</text></g>
<g font-size="9.4" fill="#000" stroke="#000" stroke-width="0.12"><text x="381" y="581.2">BL-1</text><text x="381" y="593.2">18676A</text></g>
<path d="M371.5 608V580" stroke="#000" stroke-width="2" fill="none"/><path d="M371.5 574l-3.3 7.5h6.6z" fill="#000"/>
<g font-size="9.4" fill="#000" stroke="#000" stroke-width="0.12"><text x="475.5" y="549">R-6 - 1</text><text x="475.5" y="561">Basler BE1-851</text><text x="475.5" y="573">51/50</text><text x="475.5" y="585">B, Very Inverse (It)</text><text x="475.5" y="597">CT Ratio = 400/5</text><text x="475.5" y="609">Tap = 1.94 (155A)</text><text x="475.5" y="621">Time Dial = 1.7</text><text x="475.5" y="633">Instantaneous = 9.99 (799A)</text></g>
<path d="M385 544.5H476" stroke="#000" fill="none"/><path d="M385 544.5l8 -2.5v5z" fill="#000"/>
<g font-size="9.4" fill="#000" stroke="#000" stroke-width="0.12"><text x="490.5" y="504">C-1</text><text x="490.5" y="516">1 - 4/0 AWG CU</text></g>
<path d="M568 500.5H590" stroke="#000" fill="none"/>
<path d="M399.5 674l-3 6h6z" fill="#000"/>
<text x="408" y="683" font-size="9.4">BL-3</text>
<path d="M539.5 674l-3 6h6z" fill="#000"/>
<text x="548" y="683" font-size="9.4">R-6</text>
<g transform="translate(379 34)"><rect x="0.5" y="0.5" width="209" height="393" fill="#fff" stroke="#000"/><text x="65" y="18.5" font-size="5.6" fill="#10108a" stroke="#10108a" stroke-width="0.3">MAIN SWG</text>
<path d="M80 31.5H122" stroke="#00e0e0" stroke-width="1.5"/>
<text transform="translate(130 25.5) rotate(-50)" font-size="5.5" fill="#10108a" stroke="#10108a" stroke-width="0.3" text-anchor="middle">10.69</text>
<path d="M98.5 32V357" stroke="#000" fill="none"/>
<rect x="96.5" y="52" width="4" height="4" fill="#fff" stroke="#000" stroke-width="0.9"/>
<text x="104" y="55" font-size="5.6" fill="#10108a" stroke="#10108a" stroke-width="0.3">GE AM-13.8-500</text>
<text x="104" y="61.5" font-size="5.6" fill="#10108a" stroke="#10108a" stroke-width="0.3">600A</text>
<text x="58" y="63.5" font-size="5.6" fill="#10108a" stroke="#10108a" stroke-width="0.3">1200/5 MR</text>
<text x="60" y="69" font-size="5.6" fill="#10108a" stroke="#10108a" stroke-width="0.3">600/5 Set</text>
<path d="M95 60V66M98.5 62.5H118.5M96 62q3 1 0 3M96 65q3 1 0 3" stroke="#000" fill="none" stroke-width="0.9"/>
<circle cx="122.5" cy="62.5" r="3.7" fill="#fff" stroke="#000"/>
<path d="M122.5 66.5V80.5H98.5" stroke="#000" fill="none"/>
<path d="M95.5 79L101.5 87M101.5 79L95.5 87M96 83H101" stroke="#000" fill="none"/>
<text x="77" y="84" font-size="5.6" fill="#10108a" stroke="#10108a" stroke-width="0.3">50/5</text>
<text transform="translate(96 75) rotate(-90)" font-size="5.8" fill="#10108a" stroke="#10108a" stroke-width="0.3" text-anchor="middle">0.15</text>
<text transform="translate(96 134.5) rotate(-90)" font-size="5.8" fill="#10108a" stroke="#10108a" stroke-width="0.3" text-anchor="middle">0.15 — — 9.60</text>
<rect x="98" y="134" width="1" height="1" fill="#00e0e0"/>
<path d="M90 172l2.5 -4l2.5 4z" fill="none" stroke="#000" stroke-width="0.8"/>
<path d="M92 175q1.5 -2 3 0q1.5 -2 3 0q1.5 -2 3 0q1.5 -2 3 0M92 178q1.5 2 3 0q1.5 2 3 0q1.5 2 3 0q1.5 2 3 0" stroke="#000" fill="none" stroke-width="0.8"/>
<path d="M90.5 179.5l1.5 2.5l1.5 -2.5M92 182V182.5H68" stroke="#000" fill="none" stroke-width="0.9"/>
<circle cx="68" cy="182.5" r="1.3" fill="#000"/>
<text x="113" y="168" font-size="5.6" fill="#10108a" stroke="#10108a" stroke-width="0.3">TX-2</text>
<text x="113" y="174.5" font-size="5.6" fill="#10108a" stroke="#10108a" stroke-width="0.3">1 / 1.288 MVA</text>
<text x="113" y="180.5" font-size="5.6" fill="#10108a" stroke="#10108a" stroke-width="0.3">13.8 - 0.48 kV</text>
<text x="113" y="187" font-size="5.6" fill="#10108a" stroke="#10108a" stroke-width="0.3">6%</text>
<text transform="translate(96 200) rotate(-90)" font-size="5.8" fill="#10108a" stroke="#10108a" stroke-width="0.3" text-anchor="middle">— KTI</text>
<path d="M98.5 215a2 2 0 0 1 0 5M98.5 239.5a2 2 0 0 1 0 5" stroke="#000" fill="none"/>
<text x="106" y="213" font-size="5.6" fill="#10108a" stroke="#10108a" stroke-width="0.3">GE AKR-50</text>
<text x="106" y="219" font-size="5.6" fill="#10108a" stroke="#10108a" stroke-width="0.3">1600/1760</text>
<text x="69" y="231.5" font-size="5.6" fill="#10108a" stroke="#10108a" stroke-width="0.3">SWG-4</text>
<path d="M80 235.5H140" stroke="#00e0e0" stroke-width="1.5"/>
<text transform="translate(149 228) rotate(-50)" font-size="5.5" fill="#10108a" stroke="#10108a" stroke-width="0.3" text-anchor="middle">24.13</text>
<text x="106" y="243" font-size="5.6" fill="#10108a" stroke="#10108a" stroke-width="0.3">GE AKR-30H</text>
<text x="106" y="249" font-size="5.6" fill="#10108a" stroke="#10108a" stroke-width="0.3">800/600</text>
<text transform="translate(96 258) rotate(-90)" font-size="5.8" fill="#10108a" stroke="#10108a" stroke-width="0.3" text-anchor="middle">1.00 —</text>
<text transform="translate(96 314) rotate(-90)" font-size="5.8" fill="#10108a" stroke="#10108a" stroke-width="0.3" text-anchor="middle">17.38 —</text>
<text x="82" y="324.5" font-size="5.6" fill="#10108a" stroke="#10108a" stroke-width="0.3">M-1</text>
<path d="M92 325.5H104" stroke="#00e0e0" stroke-width="1.5"/>
<text transform="translate(112 319) rotate(-50)" font-size="5.5" fill="#10108a" stroke="#10108a" stroke-width="0.3" text-anchor="middle">10.9</text>
<text transform="translate(96 338) rotate(-90)" font-size="5.8" fill="#10108a" stroke="#10108a" stroke-width="0.3" text-anchor="middle">— 1.04</text>
<circle cx="98.5" cy="361.5" r="4" fill="#fff" stroke="#000"/>
<text x="98.5" y="363.5" font-size="5" text-anchor="middle">M</text>
<text x="105" y="364" font-size="5.6" fill="#10108a" stroke="#10108a" stroke-width="0.3">M-1</text>
<text x="86" y="373" font-size="5.6" fill="#10108a" stroke="#10108a" stroke-width="0.3">250 HP</text>
<text x="86" y="379.5" font-size="5.6" fill="#10108a" stroke="#10108a" stroke-width="0.3">Induction</text></g>
<path d="M375.5 33V432.5H600" stroke="#6a8cc0" stroke-dasharray="3 2" fill="none"/>
<circle cx="376" cy="30" r="5" fill="#6a8cc0" opacity="0.85"/>
<rect x="372.5" y="228.5" width="7" height="7" fill="#8ca8d0" stroke="#5878a8"/>
<rect x="481.5" y="27.5" width="7" height="7" fill="#8ca8d0" stroke="#5878a8"/>
<rect x="481.5" y="428.5" width="7" height="7" fill="#8ca8d0" stroke="#5878a8"/>
<rect x="294" y="336" width="150" height="80" rx="15" ry="15" fill="#fff" stroke="#000"/><text x="369.5" y="382" font-size="16" text-anchor="middle">Redimensionar</text>
<polygon points="360.9,444.6 366.0,449.8 328.6,482.7 333.6,488.5 305.2,496.7 318.3,471.8 323.6,476.6" fill="#000"/><polygon points="358.9,442.6 364.0,447.8 326.6,480.7 331.6,486.5 303.2,494.7 316.3,469.8 321.6,474.6" fill="#33cc33"/>
<circle cx="375.7" cy="432.2" r="4" fill="#5f84bb" opacity="0.75"/>
<path d="M368.5 438.5L368.5 432.5L370.4 434.4L380.4 424.4L378.5 422.5L384.5 422.5L384.5 428.5L382.6 426.6L372.6 436.6L374.5 438.5Z" fill="#fff" stroke="#000" stroke-width="1.2" stroke-linejoin="round"/>
</g>
</g>
</svg></body></html>
